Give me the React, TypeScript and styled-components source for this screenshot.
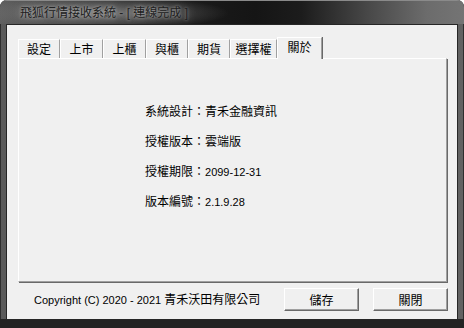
import styled, { createGlobalStyle } from "styled-components";

const GlobalStyle = createGlobalStyle`
  html, body {
    margin: 0;
    padding: 0;
    background: #ffffff;
  }
  body {
    font-family: "Noto Sans CJK TC", "Liberation Sans", sans-serif;
    font-size: 12px;
    color: #000;
  }
`;

const tabs = [
  { label: "設定", width: 42 },
  { label: "上市", width: 43 },
  { label: "上櫃", width: 43 },
  { label: "與櫃", width: 42 },
  { label: "期貨", width: 42 },
  { label: "選擇權", width: 47 },
  { label: "關於", width: 45, active: true },
];

const info = [
  { key: "系統設計：", value: "青禾金融資訊" },
  { key: "授權版本：", value: "雲端版" },
  { key: "授權期限：", value: "2099-12-31", num: true },
  { key: "版本編號：", value: "2.1.9.28", num: true },
];

export default function App() {
  return (
    <>
      <GlobalStyle />
      <Window>
        <TitleBar>
          <Title>
            飛狐行情接收系統<Latin> - [ </Latin>連線完成<Latin> ]</Latin>
          </Title>
        </TitleBar>
        <Client>
          <TabStrip>
            {tabs.map((t) => (
              <Tab key={t.label} $width={t.width} $active={!!t.active}>
                {t.label}
              </Tab>
            ))}
          </TabStrip>
          <Panel>
            <InfoList>
              {info.map((row) => (
                <InfoRow key={row.key}>
                  {row.key}
                  {row.num ? <Num>{row.value}</Num> : row.value}
                </InfoRow>
              ))}
            </InfoList>
          </Panel>
          <Footer>
            <Copyright>
              <Num>Copyright (C) 2020 - 2021 </Num>青禾沃田有限公司
            </Copyright>
            <Button>儲存</Button>
            <Button>關閉</Button>
          </Footer>
        </Client>
      </Window>
    </>
  );
}

const Window = styled.div`
  width: 464px;
  height: 328px;
  box-sizing: border-box;
  display: flex;
  flex-direction: column;
  padding: 0 6px 8px 6px;
  border-radius: 7px 7px 0 0;
  overflow: hidden;
  background: linear-gradient(90deg, #5a5a5a 0%, #4a4a4a 50%, #626262 100%);
  box-shadow: inset 0 -9px 0 #232323, inset 1px 0 0 #2e2e2e, inset -1px 0 0 #2e2e2e;
`;

const TitleBar = styled.div`
  height: 24px;
  flex: none;
  display: flex;
  align-items: center;
  padding-left: 20px;
  margin: 0 -6px;
  box-sizing: border-box;
  border-top: 1px solid #8a8a8a;
  background:
    radial-gradient(ellipse 125px 17px at 104px 12px, rgba(130, 130, 130, 0.8), rgba(130, 130, 130, 0) 100%),
    linear-gradient(
      90deg,
      #606060 0%,
      #444444 12%,
      #1e1e1e 32%,
      #151515 55%,
      #1c1c1c 65%,
      #4a4a4a 80%,
      #6c6c6c 92%,
      #747474 100%
    );
`;

const Title = styled.div`
  font-size: 12px;
  color: #202020;
  text-shadow: 0 0 8px rgba(230, 230, 230, 0.6), 0 0 3px rgba(210, 210, 210, 0.6);
  white-space: nowrap;
  line-height: 16px;
`;

const Latin = styled.span`
  font-family: "Liberation Sans", sans-serif;
`;

const Client = styled.div`
  flex: 1;
  display: flex;
  flex-direction: column;
  background: #f0f0f0;
  border: 1px solid #262626;
  padding-top: 12px;
`;

const TabStrip = styled.div`
  display: flex;
  align-items: flex-end;
  height: 21px;
  margin-left: 11px;
  position: relative;
  z-index: 1;
`;

const Tab = styled.div<{ $width: number; $active: boolean }>`
  box-sizing: border-box;
  width: ${(p) => p.$width}px;
  height: ${(p) => (p.$active ? 22 : 19)}px;
  margin-bottom: ${(p) => (p.$active ? -1 : 0)}px;
  padding-top: 1px;
  text-align: center;
  background: #f0f0f0;
  border-top: 1px solid #ffffff;
  border-left: 1px solid #ffffff;
  border-right: 1px solid #a0a0a0;
  box-shadow: 1px 0 0 #696969;
  line-height: 16px;
  white-space: nowrap;
`;

const Panel = styled.div`
  box-sizing: border-box;
  height: 224px;
  margin: 0 10px 0 11px;
  border-top: 1px solid #ffffff;
  border-left: 1px solid #ffffff;
  border-right: 1px solid #a0a0a0;
  border-bottom: 1px solid #a0a0a0;
  box-shadow: 1px 1px 0 #696969;
  padding: 37px 0 0 126px;
`;

const InfoList = styled.div`
  display: flex;
  flex-direction: column;
`;

const InfoRow = styled.div`
  height: 30px;
  line-height: 30px;
  white-space: nowrap;
`;

const Num = styled.span`
  font-family: "Liberation Sans", sans-serif;
  font-size: 11px;
`;

const Footer = styled.div`
  display: flex;
  align-items: center;
  margin-top: 6px;
  padding: 0 9px 0 27px;
  height: 23px;
`;

const Copyright = styled.div`
  flex: 1;
  white-space: nowrap;
  line-height: 16px;
`;

const Button = styled.button`
  box-sizing: border-box;
  width: 75px;
  height: 23px;
  margin-left: 14px;
  padding: 0;
  font-family: "Noto Sans CJK TC", sans-serif;
  font-size: 12px;
  color: #000;
  background: #f0f0f0;
  border: 1px solid;
  border-color: #ffffff #696969 #696969 #ffffff;
  box-shadow: inset -1px -1px 0 #a0a0a0;
  &:first-of-type {
    margin-left: 0;
  }
`;
